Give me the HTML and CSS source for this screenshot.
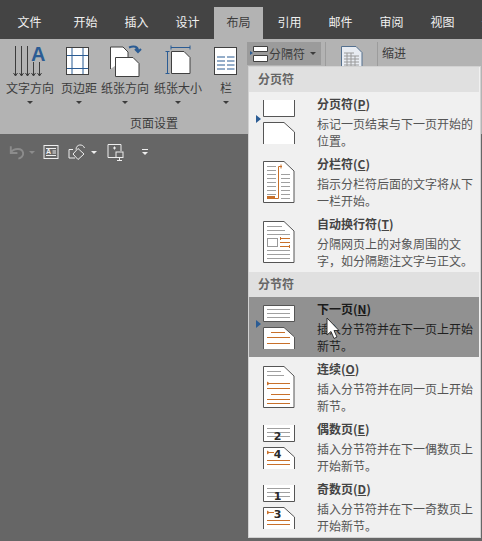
FILE: index.html
```html
<!DOCTYPE html>
<html>
  <head>
    <meta charset="utf-8">
    <title>布局</title>
    <link rel="stylesheet" href="styles.css">
  </head>
  <body>
    <div class="app">
      <nav class="tabs">
        <div class="tab tab-file">文件</div>
        <div class="tab">开始</div>
        <div class="tab">插入</div>
        <div class="tab">设计</div>
        <div class="tab tab-active">布局</div>
        <div class="tab">引用</div>
        <div class="tab">邮件</div>
        <div class="tab">审阅</div>
        <div class="tab">视图</div>
        <div class="tab">开发</div>
      </nav>

      <section class="ribbon">
        <div class="group">
          <div class="group-btns">
            <div class="big-btn btn-dir">
              <svg width="52" height="40" viewBox="0 1 52 40" class="big-icon">
                <g class="ln-dark">
                  <path d="M11.5 8V38M17.5 8V38M23.5 8V38M29.5 24V38M35.5 24V38"/>
                  <path d="M9.5 35l2 3 2-3M15.5 35l2 3 2-3M21.5 35l2 3 2-3M27.5 35l2 3 2-3M33.5 35l2 3 2-3"/>
                </g>
                <text x="27" y="23" class="big-a">A</text>
              </svg>
              <span class="big-label">文字方向</span>
              <span class="caret"></span>
            </div>
            <div class="big-btn btn-margin">
              <svg width="46" height="40" viewBox="0 1 46 40" class="big-icon">
                <rect x="10.5" y="9.5" width="22" height="27" class="page"/>
                <path d="M16 10V36M27 10V36M11 17.5H32M11 30.5H32" class="ln-blue"/>
              </svg>
              <span class="big-label">页边距</span>
              <span class="caret"></span>
            </div>
            <div class="big-btn btn-orient">
              <svg width="46" height="40" viewBox="0 1 46 40" class="big-icon">
                <path d="M8.5 31V9H21l5 5V19" class="page"/>
                <path d="M13.5 38.5V19.5H31l6 6V38.5Z" class="page"/>
                <path d="M27 9.5c5-2 9-1 9 3.5M33 11l3 3 3-3" class="ln-arrow"/>
              </svg>
              <span class="big-label">纸张方向</span>
              <span class="caret"></span>
            </div>
            <div class="big-btn btn-size">
              <svg width="60" height="40" viewBox="0 1 60 40" class="big-icon">
                <path d="M23.5 13.5H36l6 6V35.5H23.5Z" class="page"/>
                <path d="M23 9.5H42M23 7.5V11.5M42 7.5V11.5M19.500 13V36M17.500 13.5H21.500M17.500 35.5H21.500" class="ln-blue"/>
              </svg>
              <span class="big-label">纸张大小</span>
              <span class="caret"></span>
            </div>
            <div class="big-btn btn-cols">
              <svg width="36" height="40" viewBox="0 1 36 40" class="big-icon">
                <rect x="6.5" y="9.5" width="22" height="27" class="page"/>
                <path d="M9 19H17M19 19H26.5M9 23H17M19 23H26.5M9 27H17M19 27H26.5M9 31H17M19 31H26.5" class="ln-blue"/>
              </svg>
              <span class="big-label">栏</span>
              <span class="caret"></span>
            </div>
          </div>
          <div class="group-name">页面设置</div>
        </div>

        <div class="break-btn">
          <svg width="19" height="18" viewBox="0 0 19 18">
            <path d="M1 6l3 2-3 2Z" class="mark-fill"/>
            <path d="M4.500 1.500H18.500V6.500H4.500ZM4.500 10.500H18.500V16.500H4.500Z" class="page"/>
          </svg>
          <span class="break-label">分隔符</span>
          <span class="caret caret-side"></span>
        </div>
        <div class="sep sep-a"></div>
        <svg width="22" height="26" viewBox="0 0 22 26" class="sheet-icon">
          <path d="M.5 .5H15l6 6V26H.5Z" class="sheet"/>
          <path d="M3 7H13M3 10H18M3 13H18M3 16H18M3 19H18M3 22H18M6 7V24M10 7V24M14 10V24" class="sheet-grid"/>
        </svg>
        <div class="sep sep-b"></div>
        <div class="indent-label">缩进</div>
      </section>

      <section class="qat">
        <svg width="18" height="18" viewBox="0 0 19 18" class="qat-undo">
          <path d="M4 3V10H11M4 9.500C7 5 16 4 17 10C17.500 13 15 15.500 12 16" class="qat-dim"/>
        </svg>
        <span class="caret caret-dim"></span>
        <svg width="16" height="16" viewBox="0 0 16 16" class="qat-card">
          <rect x="1" y="1.500" width="14" height="13" class="qat-ln"/>
          <path d="M3 4.500H13M3 11.500H13M9.500 7H13M9.500 9H13" class="qat-ln"/>
          <text x="3" y="10" class="qat-a">A</text>
        </svg>
        <svg width="18" height="18" viewBox="0 0 18 18" class="qat-shapes">
          <path d="M5 6.500H1V15H7M8 6.500C8 1 15 .5 16.500 5" class="qat-ln"/>
          <path d="M10 5.500L16 11 10 16.500 5 11Z" class="qat-ln"/>
        </svg>
        <span class="caret caret-light"></span>
        <svg width="17" height="18" viewBox="0 0 17 18" class="qat-device">
          <path d="M9 14.500H1V1.500H14V8" class="qat-ln"/>
          <path d="M7.500 3.500V6.500M6 5H9" class="qat-ln"/>
          <rect x="9" y="9" width="7" height="5.500" class="qat-ln"/>
          <path d="M12.500 15V17M10 17.500H15" class="qat-ln"/>
        </svg>
        <span class="qat-more"></span>
      </section>

      <div class="desk"></div>
    </div>

    <div class="menu">
      <div class="menu-head">分页符</div>

      <div class="item">
        <div class="slot"><span class="mark"></span></div>
        <svg width="34" height="60" viewBox="0 0 34 60" class="item-icon">
          <path d="M1.500 8V24.500H32.500V8" class="doc"/>
          <path d="M1.500 52V30.500H22L32.500 40V52" class="doc"/>
        </svg>
        <div class="item-text">
          <div class="item-title">分页符(<u>P</u>)</div>
          <div class="item-desc">标记一页结束与下一页开始的位置。</div>
        </div>
      </div>

      <div class="item">
        <div class="slot"></div>
        <svg width="34" height="60" viewBox="0 0 34 60" class="item-icon">
          <path d="M1.500 50.500V9.500H22L32 19V50.500Z" class="doc"/>
          <path d="M5 14.500H14M5 18.500H14M5 22.500H14M5 26.500H14M5 30.500H14M5 34.500H14M5 38.500H14M5 42.500H14M19 22.500H28M19 26.500H28M19 30.500H28M19 34.500H28M19 38.500H28M19 42.500H28M19 46.500H28" class="gray"/>
          <path d="M5 45.500H13" class="orange-thick"/>
          <path d="M13 46.500H16.500V14.500H20M19 12.500V16.500" class="orange"/>
        </svg>
        <div class="item-text">
          <div class="item-title">分栏符(<u>C</u>)</div>
          <div class="item-desc">指示分栏符后面的文字将从下一栏开始。</div>
        </div>
      </div>

      <div class="item">
        <div class="slot"></div>
        <svg width="34" height="60" viewBox="0 0 34 60" class="item-icon">
          <path d="M1.500 50.500V9.500H22L32 19V50.500Z" class="doc"/>
          <path d="M5 14.500H20M5 18.500H23M5 22.500H28M5 38.500H28M5 42.500H28M5 46.500H28" class="gray"/>
          <rect x="5.500" y="26.500" width="10" height="8" class="gray-box"/>
          <path d="M18 26.500H28M18 30.500H28M18 34.500H28M18.500 25V28M27.500 33V36" class="orange"/>
        </svg>
        <div class="item-text">
          <div class="item-title">自动换行符(<u>T</u>)</div>
          <div class="item-desc">分隔网页上的对象周围的文字，如分隔题注文字与正文。</div>
        </div>
      </div>

      <div class="menu-head">分节符</div>

      <div class="item item-hover">
        <div class="slot"><span class="mark"></span></div>
        <svg width="34" height="60" viewBox="0 0 34 60" class="item-icon">
          <path d="M1.500 8.500V24.500H32.500V8.500Z" class="doc"/>
          <path d="M5 12.500H28M5 16.500H28M5 20.500H28" class="gray"/>
          <path d="M1.500 52V30.500H22L32.500 40V52" class="doc"/>
          <path d="M9 35.500H23M5 40.500H28M5 46.500H28" class="orange"/>
        </svg>
        <div class="item-text">
          <div class="item-title">下一页(<u>N</u>)</div>
          <div class="item-desc">插入分节符并在下一页上开始新节。</div>
        </div>
      </div>

      <div class="item">
        <div class="slot"></div>
        <svg width="34" height="60" viewBox="0 0 34 60" class="item-icon">
          <path d="M1.500 50.500V9.500H22L32 19V50.500Z" class="doc"/>
          <path d="M5 14.500H19M5 18.500H22" class="gray"/>
          <path d="M5 26.500H28M5 31.500H28M9 37.500H28M5 42.500H28M5 46.500H28" class="orange"/>
          <path d="M5 24.500l3 2-3 2Z" class="orange-fill"/>
        </svg>
        <div class="item-text">
          <div class="item-title">连续(<u>O</u>)</div>
          <div class="item-desc">插入分节符并在同一页上开始新节。</div>
        </div>
      </div>

      <div class="item">
        <div class="slot"></div>
        <svg width="34" height="60" viewBox="0 0 34 60" class="item-icon">
          <path d="M1.500 8V24.500H32.500V8" class="doc"/>
          <path d="M5 11.500H28M5 15.500H28M5 19.500H28" class="gray"/>
          <text x="15.500" y="23" class="digit">2</text>
          <path d="M1.500 52V30.500H22L32.500 40V52" class="doc"/>
          <path d="M5 35.500H12M5 43.500H28M5 47.500H28" class="orange"/>
          <path d="M5 33.500l3 2-3 2Z" class="orange-fill"/>
          <text x="15.500" y="41" class="digit">4</text>
        </svg>
        <div class="item-text">
          <div class="item-title">偶数页(<u>E</u>)</div>
          <div class="item-desc">插入分节符并在下一偶数页上开始新节。</div>
        </div>
      </div>

      <div class="item">
        <div class="slot"></div>
        <svg width="34" height="60" viewBox="0 0 34 60" class="item-icon">
          <path d="M1.500 8V24.500H32.500V8" class="doc"/>
          <path d="M5 11.500H28M5 15.500H28M5 19.500H28" class="gray"/>
          <text x="15.500" y="23" class="digit">1</text>
          <path d="M1.500 52V30.500H22L32.500 40V52" class="doc"/>
          <path d="M5 35.500H12M5 43.500H28M5 47.500H28" class="orange"/>
          <path d="M5 33.500l3 2-3 2Z" class="orange-fill"/>
          <text x="15.500" y="41" class="digit">3</text>
        </svg>
        <div class="item-text">
          <div class="item-title">奇数页(<u>D</u>)</div>
          <div class="item-desc">插入分节符并在下一奇数页上开始新节。</div>
        </div>
      </div>
    </div>

    <svg width="14" height="24" viewBox="0 0 14 24" class="cursor">
      <path d="M1 1V18L5 14.500 8 21.500 11 20 8 13.500H13Z"/>
    </svg>
  </body>
</html>
```

FILE: styles.css
```css
* {
  box-sizing: border-box;
}
html,
body {
  margin: 0;
  height: 100%;
  overflow: hidden;
}
body {
  font-family: "Noto Sans CJK SC", "Liberation Sans", sans-serif;
  font-size: 12px;
  line-height: 17px;
  background: #666666;
}
.app {
  display: flex;
  flex-direction: column;
  height: 541px;
}

/* tabs */
.tabs {
  display: flex;
  height: 39px;
  flex-shrink: 0;
  overflow: hidden;
  background: #444444;
  color: #f1f1f1;
}
.tab {
  flex: 0 0 49px;
  margin: 7px 1px 0;
  padding-top: 6px;
  text-align: center;
}
.tab-file {
  flex-basis: 59px;
  margin: 7px 1px 0 0;
}
.tab-active {
  background: #b3b3b3;
  color: #3c3c3c;
}

/* ribbon */
.ribbon {
  display: flex;
  align-items: flex-start;
  height: 95px;
  flex-shrink: 0;
  background: #b3b3b3;
  color: #3c3c3c;
}
.group {
  width: 247px;
  flex-shrink: 0;
  padding-left: 4px;
}
.group-btns {
  display: flex;
}
.big-btn {
  display: flex;
  flex-direction: column;
  align-items: center;
}
.btn-dir {
  width: 52px;
}
.btn-margin,
.btn-orient {
  width: 46px;
}
.btn-size {
  width: 60px;
}
.btn-cols {
  width: 36px;
}
.big-icon {
  display: block;
  flex-shrink: 0;
}
.big-label {
  white-space: nowrap;
}
.big-a {
  font-family: "Liberation Sans", sans-serif;
  font-size: 20px;
  font-weight: 700;
  fill: #2b5c94;
}
.caret {
  display: block;
  width: 0;
  height: 0;
  border-left: 3px solid transparent;
  border-right: 3px solid transparent;
  border-top: 3px solid #3c3c3c;
  margin-top: 5px;
}
.group-name {
  text-align: center;
  margin-top: 10px;
  padding-left: 57px;
}
.break-btn {
  display: flex;
  align-items: center;
  width: 74px;
  height: 23px;
  margin-top: 3px;
  padding-left: 2px;
  background: #9b9b9b;
  flex-shrink: 0;
}
.break-label {
  margin-left: 1px;
}
.caret-side {
  margin: 0 0 0 5px;
}
.sep {
  width: 1px;
  height: 24px;
  margin-top: 3px;
  background: #9c9c9c;
  flex-shrink: 0;
}
.sep-a {
  margin-left: 4px;
}
.sheet-icon {
  margin: 7px 14px 0 15px;
  flex-shrink: 0;
}
.sheet {
  fill: #e8ecf2;
  stroke: #54708f;
}
.sheet-grid {
  fill: none;
  stroke: #9a9a9a;
}
.indent-label {
  margin: 5px 0 0 4px;
  white-space: nowrap;
}

/* svg strokes */
.page {
  fill: #ffffff;
  stroke: #404040;
}
.ln-dark {
  fill: none;
  stroke: #3c3c3c;
}
.ln-blue {
  fill: none;
  stroke: #2b5c94;
}
.ln-arrow {
  fill: none;
  stroke: #2b5c94;
  stroke-width: 2;
}
.mark-fill {
  fill: #2b5c94;
}

/* quick access row */
.qat {
  display: flex;
  align-items: center;
  height: 36px;
  flex-shrink: 0;
  padding-left: 7px;
}
.qat svg {
  display: block;
  flex-shrink: 0;
}
.qat-dim {
  fill: none;
  stroke: #8c8c8c;
  stroke-width: 2;
}
.qat-ln {
  fill: none;
  stroke: #eeeeee;
}
.qat-a {
  font-family: "Liberation Sans", sans-serif;
  font-size: 7px;
  font-weight: 700;
  fill: #eeeeee;
}
.caret-dim {
  margin: 0 0 0 4px;
  border-top-color: #8c8c8c;
}
.caret-light {
  margin: 0 0 0 5px;
  border-top-color: #eeeeee;
}
.qat-card {
  margin-left: 8px;
}
.qat-shapes {
  margin-left: 9px;
}
.qat-device {
  margin-left: 10px;
}
.qat-more {
  width: 6px;
  height: 6px;
  margin-left: 18px;
  border-top: 1px solid #eeeeee;
}
.qat-more::after {
  content: "";
  display: block;
  width: 0;
  height: 0;
  margin-top: 2px;
  border-left: 3px solid transparent;
  border-right: 3px solid transparent;
  border-top: 3px solid #eeeeee;
}
.desk {
  flex: 1;
}

/* dropdown */
.menu {
  position: absolute;
  left: 248px;
  top: 66px;
  width: 233px;
  height: 472px;
  background: #f0f0f0;
  border: 1px solid #d2d2d2;
  color: #555555;
}
.menu-head {
  height: 25px;
  padding: 3px 0 0 9px;
  margin-right: 1px;
  background: #e0e0e0;
  color: #666666;
  font-weight: 700;
}
.item {
  display: flex;
  height: 60px;
  margin-right: 1px;
}
.item-hover {
  background: #919191;
  color: #1f1f1f;
}
.slot {
  flex: 0 0 13px;
  padding: 23px 0 0 7px;
}
.mark {
  display: block;
  width: 0;
  height: 0;
  border-top: 4px solid transparent;
  border-bottom: 4px solid transparent;
  border-left: 5px solid #2b5c94;
}
.item-icon {
  display: block;
  flex-shrink: 0;
}
.item-text {
  width: 158px;
  margin-left: 21px;
  padding-top: 3px;
}
.item-title {
  font-weight: 700;
  color: #444444;
}
.item-hover .item-title {
  color: #1a1a1a;
}
.item-desc {
  margin-top: 3px;
}
.doc {
  fill: #ffffff;
  stroke: #555555;
}
.gray {
  fill: none;
  stroke: #a0a0a0;
}
.gray-box {
  fill: none;
  stroke: #999999;
}
.orange {
  fill: none;
  stroke: #c8702a;
}
.orange-thick {
  fill: none;
  stroke: #c8702a;
  stroke-width: 3;
}
.orange-fill {
  fill: #c8702a;
}
.digit {
  font-family: "DejaVu Sans", sans-serif;
  font-size: 11px;
  font-weight: 700;
  fill: #2a2a2a;
  text-anchor: middle;
}
.cursor {
  position: absolute;
  left: 326px;
  top: 317px;
  fill: #ffffff;
  stroke: #333333;
}
```
